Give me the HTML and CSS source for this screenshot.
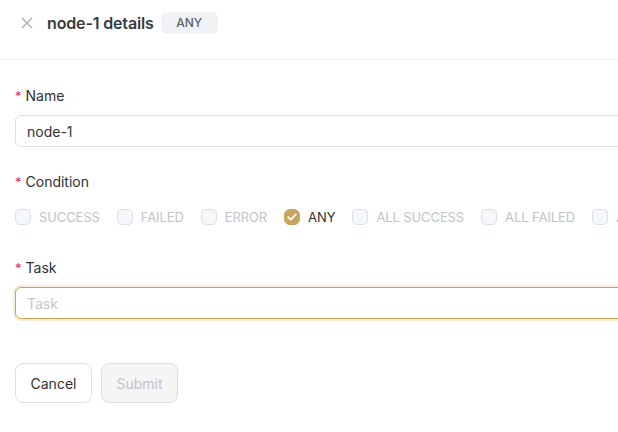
FILE: index.html
```html
<!DOCTYPE html>
<html>
<head>
<meta charset="utf-8">
<link rel="stylesheet" href="styles.css">
</head>
<body>
<div class="panel">
  <header class="header">
    <span class="close">
      <svg width="12" height="12" viewBox="0 0 12 12"><path d="M1 1L11 11M11 1L1 11" stroke="#a8abb2" stroke-width="1.4" fill="none"/></svg>
    </span>
    <h1 class="title">node-1 details</h1>
    <span class="badge">ANY</span>
  </header>
  <form class="form">
    <div class="item">
      <label class="label"><span class="req">*</span>Name</label>
      <div class="input"><span class="value">node-1</span></div>
    </div>
    <div class="item">
      <label class="label"><span class="req">*</span>Condition</label>
      <div class="checks">
        <span class="check disabled"><span class="box"></span><span class="ctext">SUCCESS</span></span>
        <span class="check disabled"><span class="box"></span><span class="ctext">FAILED</span></span>
        <span class="check disabled"><span class="box"></span><span class="ctext">ERROR</span></span>
        <span class="check checked"><span class="box"><svg width="10" height="8" viewBox="0 0 10 8"><path d="M1.2 4.2L3.8 6.6L8.8 1.4" stroke="#fff" stroke-width="1.8" fill="none" stroke-linecap="round" stroke-linejoin="round"/></svg></span><span class="ctext">ANY</span></span>
        <span class="check disabled"><span class="box"></span><span class="ctext">ALL SUCCESS</span></span>
        <span class="check disabled"><span class="box"></span><span class="ctext">ALL FAILED</span></span>
        <span class="check disabled"><span class="box"></span><span class="ctext">ALL ERROR</span></span>
      </div>
    </div>
    <div class="item">
      <label class="label"><span class="req">*</span>Task</label>
      <div class="input focus"><span class="placeholder">Task</span></div>
    </div>
    <div class="footer">
      <button type="button" class="btn">Cancel</button>
      <button type="button" class="btn btn-disabled">Submit</button>
    </div>
  </form>
</div>
</body>
</html>
```

FILE: styles.css
```css
html, body {
  margin: 0;
  padding: 0;
  background: #fff;
  overflow: hidden;
}
body {
  font-family: Inter, "Noto Sans", sans-serif;
  color: #303133;
  width: 618px;
  height: 432px;
}
.panel {
  width: 680px;
}
.header {
  display: flex;
  align-items: center;
  height: 59px;
  padding: 0 0 0 21px;
  border-bottom: 1px solid #ebeef5;
  box-sizing: content-box;
}
.close {
  display: flex;
  width: 12px;
  height: 12px;
  margin-top: -14px;
  margin-right: 14px;
}
.title {
  margin: -14px 7px 0 0;
  font-size: 16px;
  font-weight: 600;
  color: #383a40;
  letter-spacing: -0.15px;
}
.badge {
  margin-top: -14px;
  display: inline-flex;
  align-items: center;
  justify-content: center;
  width: 57px;
  height: 22px;
  background: #f0f2f5;
  border-radius: 6px;
  font-size: 12px;
  font-weight: 500;
  color: #5e6270;
}
.form {
  padding: 25px 0 0 15px;
}
.item {
  margin-bottom: 24px;
}
.label {
  display: block;
  height: 22px;
  line-height: 22px;
  font-size: 14px;
  color: #303133;
  margin-bottom: 8px;
}
.req {
  color: #d9394a;
  margin-right: 4px;
  font-size: 13px;
}
.input {
  box-sizing: border-box;
  height: 32px;
  border: 1px solid #dcdfe6;
  border-radius: 6px;
  padding: 0 11px;
  display: flex;
  align-items: center;
  font-size: 14px;
  color: #303133;
}
.input.focus {
  border-color: #c9a45c;
  box-shadow: 0 0 0 2px #f5ecd9;
}
.placeholder {
  color: #c5c8cf;
}
.checks {
  display: flex;
  align-items: center;
  height: 32px;
  white-space: nowrap;
}
.check {
  display: inline-flex;
  align-items: center;
  margin-right: 17px;
  font-size: 13px;
}
.box {
  box-sizing: border-box;
  width: 16px;
  height: 16px;
  border: 1px solid #dcdfe6;
  background: #f5f7fa;
  border-radius: 5px;
  margin-right: 8px;
  display: flex;
  align-items: center;
  justify-content: center;
}
.ctext {
  letter-spacing: -0.1px;
}
.disabled .ctext {
  color: #c0c4cc;
}
.checked .box {
  background: #c9a45c;
  border-color: #c9a45c;
  border-radius: 6px;
}
.checked .ctext {
  color: #303133;
}
.footer {
  display: flex;
  gap: 9px;
  padding-top: 20px;
}
.btn {
  box-sizing: border-box;
  width: 77px;
  height: 40px;
  border: 1px solid #dcdfe6;
  border-radius: 8px;
  background: #fff;
  font-family: Inter, "Noto Sans", sans-serif;
  font-size: 14px;
  color: #303133;
  padding: 0;
}
.btn-disabled {
  background: #f5f5f5;
  color: #c0c4cc;
}
```
